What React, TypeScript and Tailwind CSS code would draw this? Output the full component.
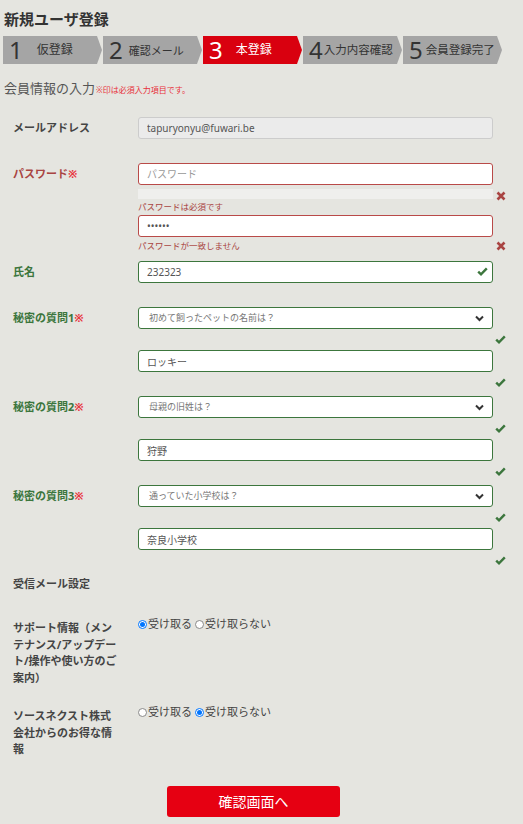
import React from 'react';

const font = '[font-family:"Noto_Sans","Noto_Sans_CJK_JP",sans-serif]';

type Step = { n: string; label: string; active: boolean; gap: string };

const steps: Step[] = [
    { n: '1', label: '仮登録', active: false, gap: 'ml-[14px] text-[12px]' },
    { n: '2', label: '確認メール', active: false, gap: 'ml-[6px] text-[11px]' },
    { n: '3', label: '本登録', active: true, gap: 'ml-[13px] text-[12px]' },
    { n: '4', label: '入力内容確認', active: false, gap: 'ml-[1px] text-[11.5px]' },
    { n: '5', label: '会員登録完了', active: false, gap: 'ml-[3px] text-[11.5px]' },
];

const Check = () => (
    <svg width="11" height="9" viewBox="0 0 11 9">
        <path d="M1.2 4.6 L4 7.3 L9.8 1.3" fill="none" stroke="#3c763d" strokeWidth="2.4" />
    </svg>
);

const Cross = () => (
    <svg width="10" height="10" viewBox="0 0 10 10">
        <path d="M1.5 1.5 L8.5 8.5 M8.5 1.5 L1.5 8.5" fill="none" stroke="#a94442" strokeWidth="2.6" />
    </svg>
);

const Chevron = () => (
    <svg width="9" height="7" viewBox="0 0 9 7">
        <path d="M1 1.5 L4.5 5 L8 1.5" fill="none" stroke="#333" strokeWidth="2" />
    </svg>
);

// icon sitting at the right edge under a field
const IconRow = ({ icon, className = '' }: { icon: React.ReactNode; className?: string }) => (
    <div className={`flex h-[10px] items-center justify-end pr-[4px] ${className}`}>{icon}</div>
);

const Label = ({ text, tone, req }: { text: string; tone: 'dark' | 'red' | 'green'; req?: boolean }) => {
    const color = tone === 'red' ? 'text-[#a94442]' : tone === 'green' ? 'text-[#3c763d]' : 'text-[#444]';
    return (
        <div className={`w-[125px] shrink-0 text-[11px] font-bold ${color}`}>
            {text}
            {req && <span className="text-[#e8303a]">※</span>}
        </div>
    );
};

const Field = ({ value, tone, type = 'text', placeholder, check }: { value?: string; tone: 'gray' | 'red' | 'green'; type?: string; placeholder?: string; check?: boolean }) => {
    const border = tone === 'red' ? 'border-[#b94a48] bg-white' : tone === 'green' ? 'border-[#3c763d] bg-white' : 'border-[#cccccc] bg-[#ebebeb]';
    return (
        <div className="relative w-[355px]">
            <input
                readOnly
                type={type}
                value={value ?? ''}
                placeholder={placeholder}
                className={`block h-[22px] w-full rounded-[3px] border pl-[8px] text-[10px] text-[#555] outline-none placeholder:text-[#999] ${border} ${font}`}
            />
            {check && (
                <div className="absolute right-[5px] top-[6px]">
                    <Check />
                </div>
            )}
        </div>
    );
};

const Select = ({ text }: { text: string }) => (
    <div className="flex h-[22px] w-[355px] items-center justify-between rounded-[3px] border border-[#3c763d] bg-white pl-[10px] pr-[8px]">
        <span className="text-[9px] text-[#777]">{text}</span>
        <Chevron />
    </div>
);

const Radio = ({ on }: { on: boolean }) => (
    <span className={`flex h-[9px] w-[9px] items-center justify-center rounded-full border bg-white ${on ? 'border-[#0075ff]' : 'border-[#8a8a8a]'}`}>
        {on && <span className="h-[5px] w-[5px] rounded-full bg-[#0075ff]" />}
    </span>
);

const RadioPair = ({ yes }: { yes: boolean }) => (
    <div className="flex h-[16px] items-center text-[11px] text-[#444]">
        <Radio on={yes} />
        <span className="ml-[1px]">受け取る</span>
        <span className="ml-[3px]">
            <Radio on={!yes} />
        </span>
        <span className="ml-[1px]">受け取らない</span>
    </div>
);

const Question = ({ label, question, answer, first }: { label: string; question: string; answer: string; first?: boolean }) => (
    <div className={first ? 'mt-[24px]' : 'mt-[9px]'}>
        <div className="flex items-center">
            <Label text={label} tone="green" req />
            <Select text={question} />
        </div>
        <div className="ml-[125px] w-[372px]">
            <IconRow icon={<Check />} className="mt-[5px]" />
            <div className="mt-[6px]">
                <Field value={answer} tone="green" />
            </div>
            <IconRow icon={<Check />} className="mt-[5px]" />
        </div>
    </div>
);

export default function App() {
    return (
        <div className={`min-h-[824px] w-[523px] bg-[#e5e5e0] text-[#333] ${font}`}>
            <h1 className="pl-[4px] pt-[10px] text-[15px] font-bold leading-[18px] text-[#333]">新規ユーザ登録</h1>

            <div className="mt-[8px] flex pl-[3px]">
                {steps.map((s) => (
                    <div
                        key={s.n}
                        className={`flex h-[28px] w-[100px] items-center pl-[6px] [clip-path:polygon(0_0,94px_0,99px_50%,94px_100%,0_100%)] ${s.active ? 'bg-[#d9000f] text-white' : 'bg-[#a5a5a5] text-[#333]'}`}
                    >
                        <span className="text-[24px] leading-none">{s.n}</span>
                        <span className={`${s.gap} leading-none`}>{s.label}</span>
                    </div>
                ))}
            </div>

            <div className="mt-[16px] flex items-end pl-[4px] leading-[16px]">
                <span className="text-[13px] text-[#555]">会員情報の入力</span>
                <span className="ml-[1px] text-[8px] leading-[12px] text-[#e8303a]">※印は必須入力項目です。</span>
            </div>

            <div className="pl-[13px]">
                {/* email */}
                <div className="mt-[21px] flex items-center">
                    <Label text="メールアドレス" tone="dark" />
                    <Field value="tapuryonyu@fuwari.be" tone="gray" />
                </div>

                {/* password */}
                <div className="mt-[24px] flex items-center">
                    <Label text="パスワード" tone="red" req />
                    <Field tone="red" placeholder="パスワード" />
                </div>
                <div className="ml-[125px] w-[372px]">
                    <div className="mt-[4px] flex h-[10px] items-center justify-between pr-[4px]">
                        <div className="h-[10px] w-[355px] bg-[#efefed]" />
                        <div className="mt-[3px]">
                            <Cross />
                        </div>
                    </div>
                    <div className="mt-[1px] h-[14px] text-[8.5px] leading-[14px] text-[#a94442]">パスワードは必須です</div>
                    <div className="mt-[1px]">
                        <Field tone="red" type="password" value="123456" />
                    </div>
                    <div className="mt-[2px] flex h-[14px] items-center justify-between pr-[4px]">
                        <span className="text-[8.5px] text-[#a94442]">パスワードが一致しません</span>
                        <Cross />
                    </div>
                </div>

                {/* name */}
                <div className="mt-[8px] flex items-center">
                    <Label text="氏名" tone="green" />
                    <Field value="232323" tone="green" check />
                </div>

                <Question first label="秘密の質問1" question="初めて飼ったペットの名前は？" answer="ロッキー" />
                <Question label="秘密の質問2" question="母親の旧姓は？" answer="狩野" />
                <Question label="秘密の質問3" question="通っていた小学校は？" answer="奈良小学校" />

                <div className="mt-[11px] text-[11px] font-bold leading-[16px] text-[#444]">受信メール設定</div>

                <div className="mt-[24px] flex">
                    <div className="w-[125px] shrink-0 pt-[4px] text-[11px] font-bold leading-[16.5px] text-[#444]">
                        サポート情報（メン<br />テナンス/アップデー<br />ト/操作や使い方のご<br />案内）
                    </div>
                    <RadioPair yes />
                </div>

                <div className="mt-[18px] flex">
                    <div className="w-[125px] shrink-0 pt-[4px] text-[11px] font-bold leading-[16.5px] text-[#444]">
                        ソースネクスト株式<br />会社からのお得な情<br />報
                    </div>
                    <RadioPair yes={false} />
                </div>
            </div>

            <div className="mt-[28px] pl-[167px]">
                <button className="flex h-[31px] w-[173px] items-center justify-center rounded-[3px] bg-[#e60012] text-[14px] text-white">
                    確認画面へ
                </button>
            </div>
        </div>
    );
}
